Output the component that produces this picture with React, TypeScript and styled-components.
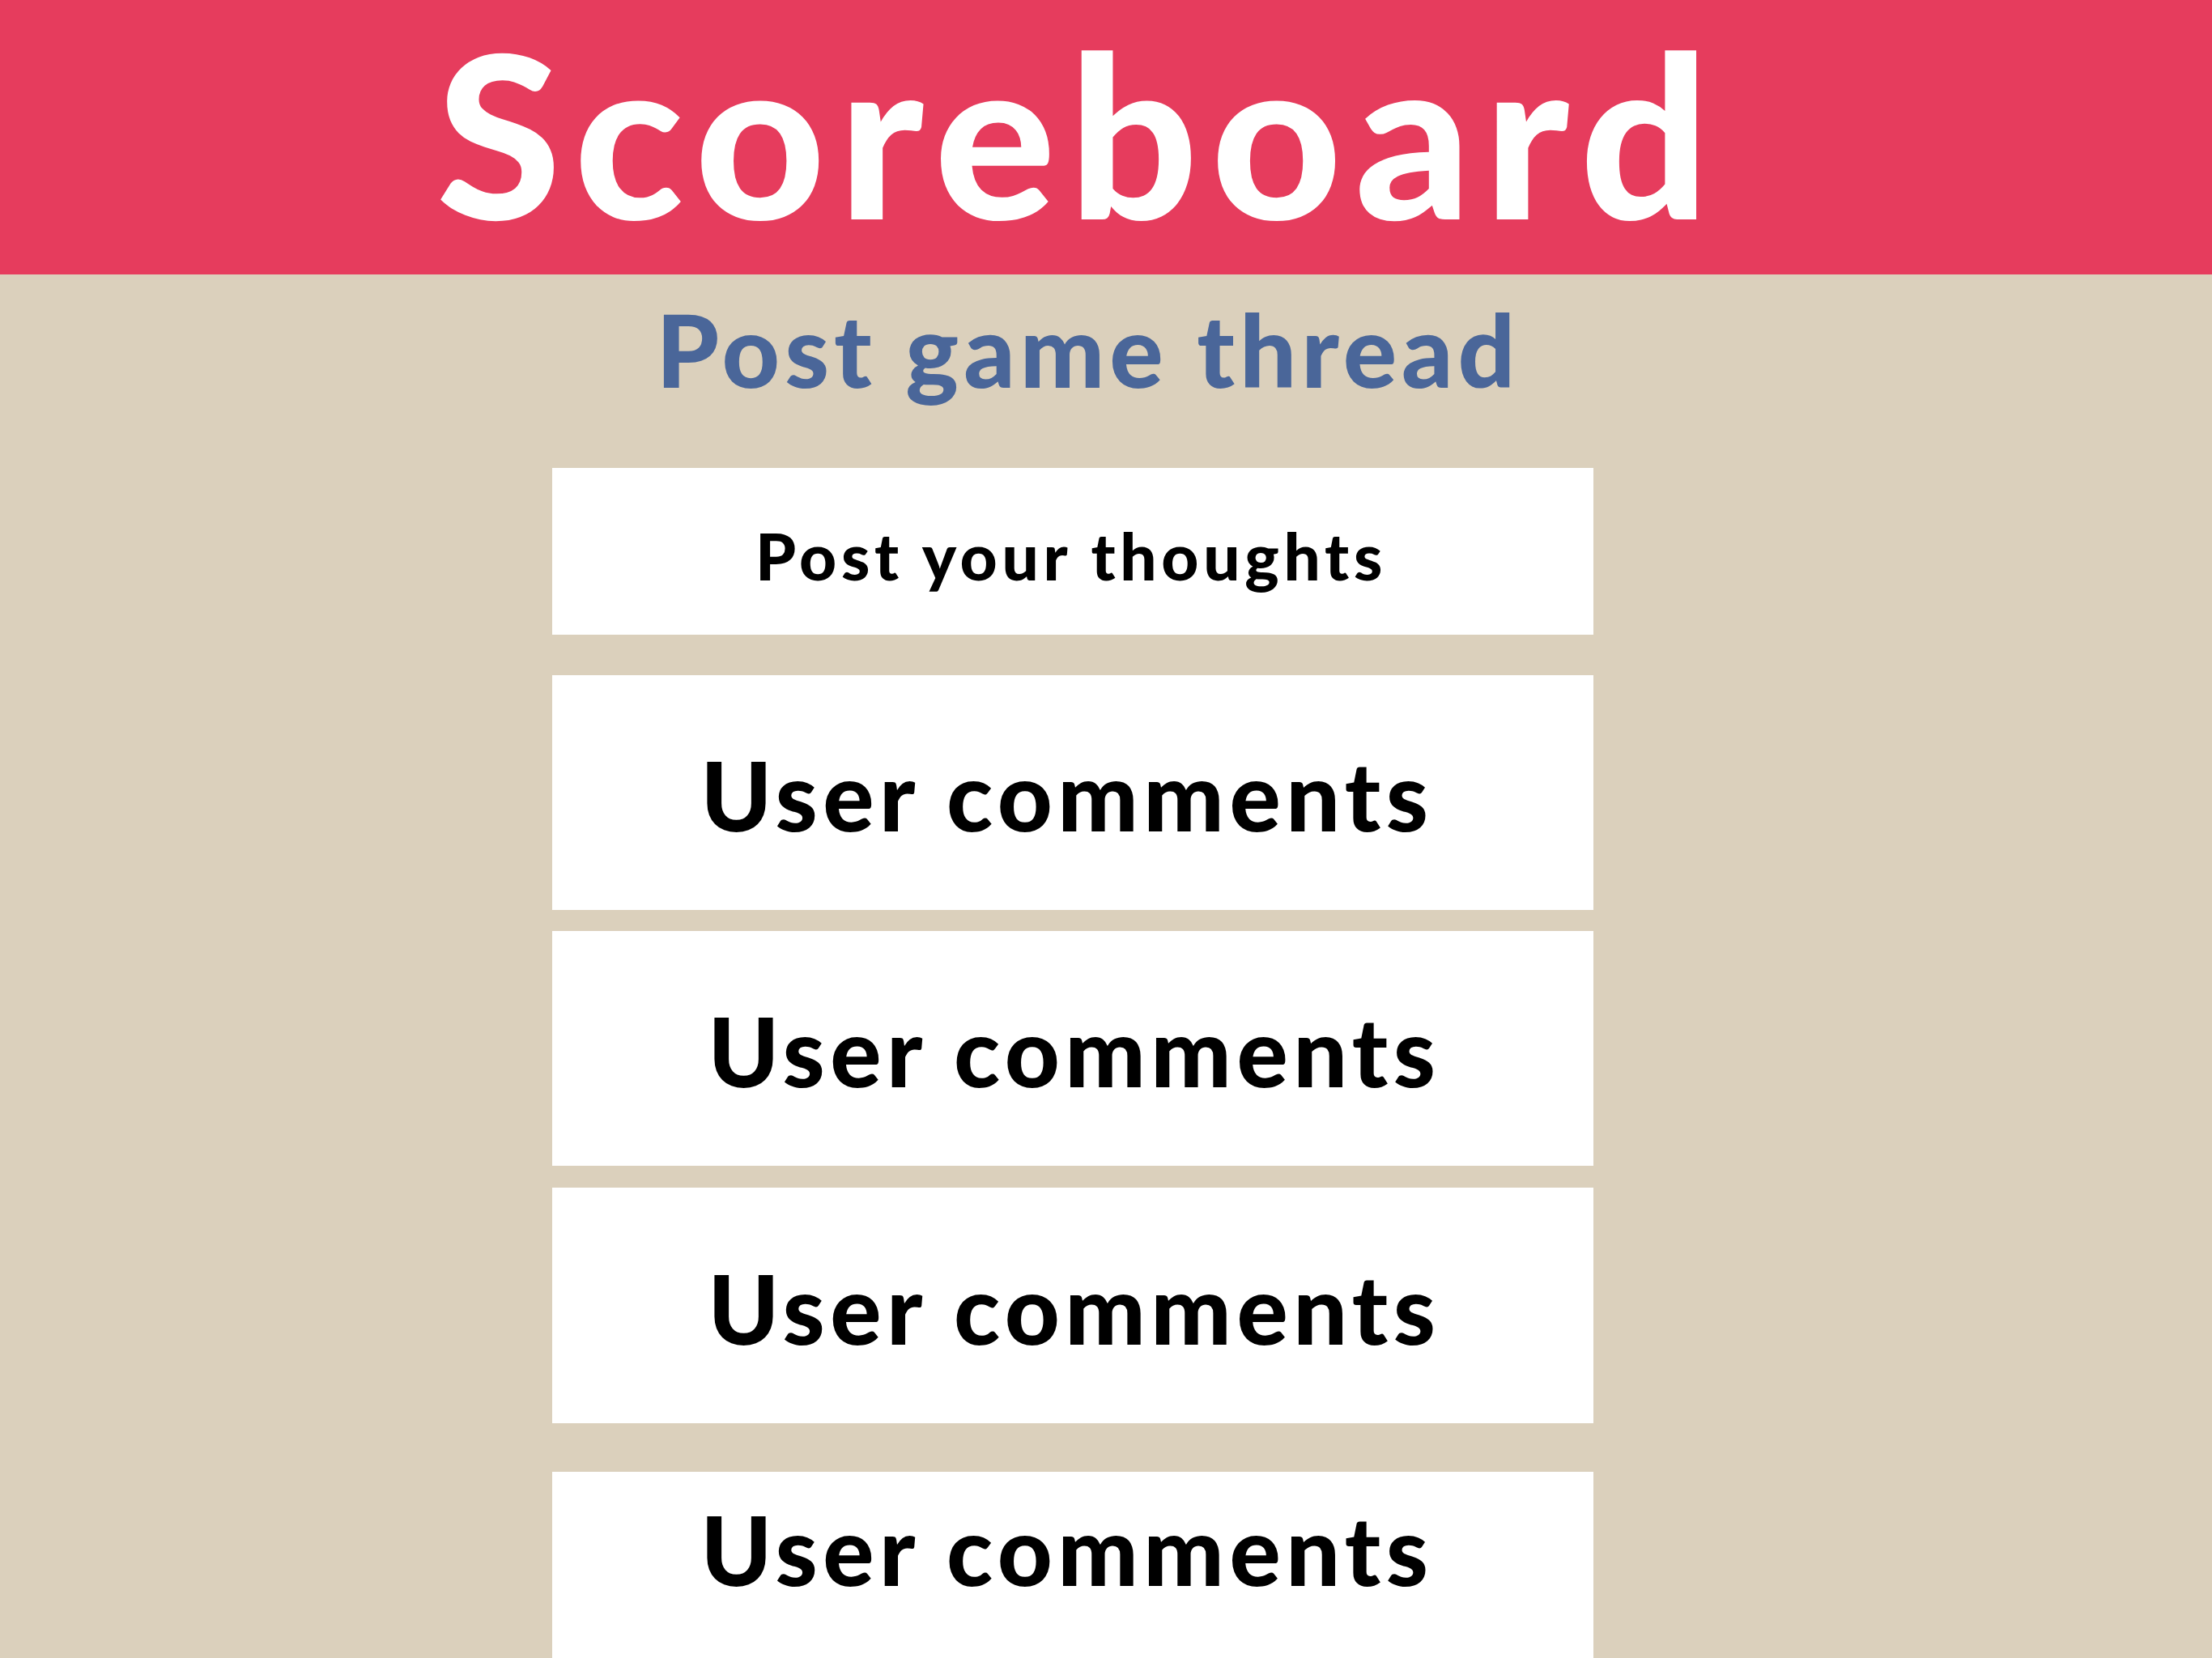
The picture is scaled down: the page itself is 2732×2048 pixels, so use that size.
import React from 'react'
import styled, { createGlobalStyle } from 'styled-components'

const GlobalStyle = createGlobalStyle`
  body {
    margin: 0;
    background: #DBD0BC;
    font-family: Lato, "Noto Sans", sans-serif;
    overflow: hidden;
  }
`

const Header = styled.header`
  height: 339px;
  background: #E63C5D;
  display: flex;
  justify-content: center;
  align-items: center;
  padding-right: 82px;
`

const Title = styled.h1`
  margin: 0 0 14px 16px;
  color: #fff;
  font-size: 280px;
  font-weight: 900;
  line-height: 1.15;
  letter-spacing: 16px;
`

const Main = styled.main`
  display: flex;
  flex-direction: column;
  align-items: center;
  padding-right: 82px;
`

const SubTitle = styled.h2`
  margin: 18px 0 0 38px;
  color: #4A6699;
  font-size: 124px;
  font-weight: 900;
  line-height: 1.2;
  letter-spacing: 6px;
`

const Feed = styled.section`
  width: 1286px;
  display: flex;
  flex-direction: column;
`

const Card = styled.div<{ $height: number; $top: number; $shift: number; $size: number }>`
  box-sizing: border-box;
  height: ${p => p.$height}px;
  margin-top: ${p => p.$top}px;
  background: #fff;
  display: flex;
  justify-content: center;
  align-items: center;
  padding-left: ${p => Math.max(0, p.$shift * 2)}px;
  padding-right: ${p => Math.max(0, -p.$shift * 2)}px;
  color: #000;
  font-size: ${p => p.$size}px;
  font-weight: 900;
  letter-spacing: ${p => (p.$size > 100 ? 6.5 : 5.7)}px;
`

const Label = styled.span<{ $drop: number }>`
  margin-top: ${p => p.$drop}px;
`

const cards = [
  { text: 'Post your thoughts', height: 206, top: 72, shift: -2, size: 80, drop: 10 },
  { text: 'User comments', height: 290, top: 50, shift: -7, size: 118, drop: 6 },
  { text: 'User comments', height: 290, top: 26, shift: 2, size: 118, drop: 6 },
  { text: 'User comments', height: 291, top: 27, shift: 2, size: 118, drop: 6 },
  { text: 'User comments', height: 290, top: 60, shift: -7, size: 118, drop: -98 },
]

export default function App() {
  return (
    <>
      <GlobalStyle />
      <Header>
        <Title>Scoreboard</Title>
      </Header>
      <Main>
        <SubTitle>Post game thread</SubTitle>
        <Feed>
          {cards.map((c, i) => (
            <Card key={i} $height={c.height} $top={c.top} $shift={c.shift} $size={c.size}>
              <Label $drop={c.drop}>{c.text}</Label>
            </Card>
          ))}
        </Feed>
      </Main>
    </>
  )
}
